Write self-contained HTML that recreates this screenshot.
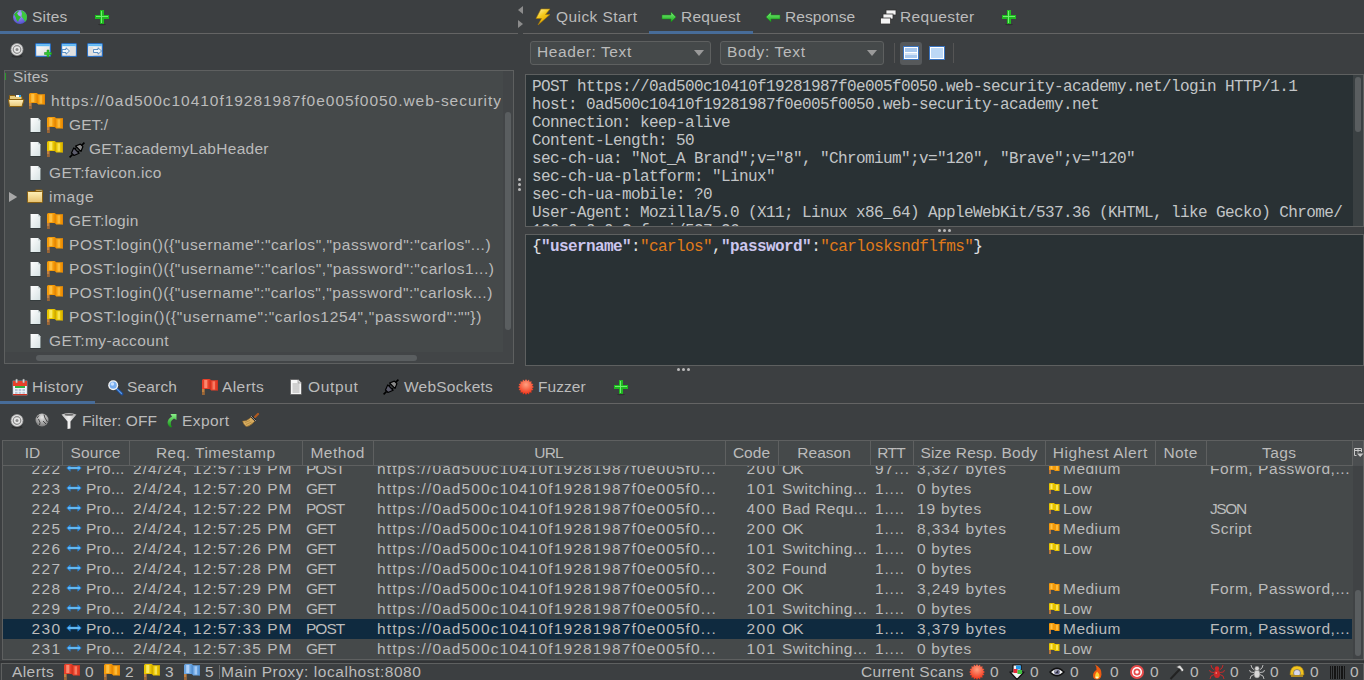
<!DOCTYPE html>
<html><head><meta charset="utf-8"><style>
html,body{margin:0;padding:0;width:1364px;height:680px;overflow:hidden;background:#3c3f41}
body>div,body div{position:absolute;box-sizing:content-box}
.t{font-family:"Liberation Sans",sans-serif;font-size:15.5px;line-height:16px;white-space:pre;color:#bbbbbb}
.m{font-family:"Liberation Mono",monospace;font-size:16px;letter-spacing:-0.6px;line-height:18px;white-space:pre;color:#d4d7d9}
.m span{position:static}
svg{position:absolute;overflow:visible}
</style></head><body>
<div style="left:0;top:0;width:1364px;height:680px;background:#3c3f41"></div>
<svg style="position:absolute;left:12px;top:9px;" width="16" height="16" viewBox="0 0 16 16"><defs><radialGradient id="gl" cx="0.45" cy="0.3" r="0.75"><stop offset="0" stop-color="#b0a8ff"/><stop offset="1" stop-color="#4a48c8"/></radialGradient></defs><circle cx="8" cy="8" r="7" fill="url(#gl)"/><path d="M2 5.5 Q4 2 7.5 1.2 L5 4.5 L6.5 6.5 L9 8 L7 10.5 L6 13 L4.5 11 L3.5 8 Z" fill="#2eb82e"/><path d="M9 1.2 Q14 2.5 15 7.5 L14.5 11 L13 13 L12 10.5 L9.5 7.5 L10 4.5 Z" fill="#3cc83c"/></svg>
<div class="t" style="left:32.0px;top:9px;letter-spacing:0.187px;color:#bbbbbb;">Sites</div>
<svg style="position:absolute;left:94px;top:9px;" width="16" height="16" viewBox="0 0 16 16"><rect x="6" y="1" width="4" height="14" fill="#1fb91f"/><rect x="1" y="6" width="14" height="4" fill="#1fb91f"/><rect x="7" y="2" width="1" height="12" fill="#6ef06e"/><rect x="2" y="7" width="12" height="1" fill="#6ef06e"/><ellipse cx="8" cy="15.5" rx="4" ry="0.8" fill="#222" opacity="0.5"/></svg>
<div style="left:0px;top:33px;width:518px;height:1px;background:#646464;"></div>
<div style="left:0px;top:31px;width:80px;height:3px;background:#476c99;"></div>
<svg style="position:absolute;left:10px;top:43px;" width="14" height="15" viewBox="0 0 14 15"><ellipse cx="7" cy="13.3" rx="5.5" ry="1.2" fill="#1a1a1a" opacity="0.45"/><circle cx="7" cy="6.5" r="6" fill="#e6e6e6" stroke="#9a9a9a" stroke-width="0.8"/><circle cx="7" cy="6.5" r="3.8" fill="none" stroke="#8a8a8a" stroke-width="1.2"/><circle cx="7" cy="6.5" r="1.5" fill="#8a8a8a"/></svg>
<svg style="position:absolute;left:35px;top:43px;" width="17" height="15" viewBox="0 0 17 15"><defs><linearGradient id="wb" x1="0" y1="0" x2="1" y2="1"><stop offset="0" stop-color="#ffffff"/><stop offset="1" stop-color="#d8d8d8"/></linearGradient></defs><rect x="0.6" y="0.6" width="14.8" height="12.8" rx="1" fill="url(#wb)" stroke="#2a6ec0" stroke-width="1.2"/><rect x="1.2" y="1.2" width="13.6" height="2" fill="#5cb8f4"/><path d="M9.5 9.5 H12 V7 H14 V9.5 H16.5 V11.5 H14 V14 H12 V11.5 H9.5Z" fill="#30c830" stroke="#1a8a1a" stroke-width="0.5"/></svg>
<svg style="position:absolute;left:61px;top:43px;" width="17" height="15" viewBox="0 0 17 15"><defs><linearGradient id="wb" x1="0" y1="0" x2="1" y2="1"><stop offset="0" stop-color="#ffffff"/><stop offset="1" stop-color="#d8d8d8"/></linearGradient></defs><rect x="0.6" y="0.6" width="14.8" height="12.8" rx="1" fill="url(#wb)" stroke="#2a6ec0" stroke-width="1.2"/><rect x="1.2" y="1.2" width="13.6" height="2" fill="#5cb8f4"/><rect x="9" y="4" width="5.5" height="8.6" fill="#e0e0e0"/><path d="M1.2 6.5 H5 V4.8 L8.5 8 L5 11.2 V9.5 H1.2Z" fill="#eef6fc" stroke="#3a78b8" stroke-width="0.8"/></svg>
<svg style="position:absolute;left:87px;top:43px;" width="17" height="15" viewBox="0 0 17 15"><defs><linearGradient id="wb" x1="0" y1="0" x2="1" y2="1"><stop offset="0" stop-color="#ffffff"/><stop offset="1" stop-color="#d8d8d8"/></linearGradient></defs><rect x="0.6" y="0.6" width="14.8" height="12.8" rx="1" fill="url(#wb)" stroke="#2a6ec0" stroke-width="1.2"/><rect x="1.2" y="1.2" width="13.6" height="2" fill="#5cb8f4"/><rect x="1.3" y="4" width="5" height="8.6" fill="#e0e0e0"/><path d="M6.5 6.5 H11 V4.8 L14.6 8 L11 11.2 V9.5 H6.5Z" fill="#eef6fc" stroke="#3a78b8" stroke-width="0.8"/></svg>
<div style="left:4px;top:70px;width:508px;height:292px;border:1px solid #5e6060;background:#45494a;"></div>
<div class="t" style="left:13.0px;top:69px;letter-spacing:0.187px;color:#bbbbbb;clip-path:inset(1px 0 0 0)">Sites</div>
<div style="left:5px;top:73px;width:1px;height:7px;background:#2a9a2a;"></div>
<svg style="position:absolute;left:8px;top:93px;" width="17" height="16" viewBox="0 0 17 16"><defs><linearGradient id="fo" x1="0" y1="0" x2="0" y2="1"><stop offset="0" stop-color="#fff0c0"/><stop offset="1" stop-color="#e8c878"/></linearGradient></defs><path d="M1.5 2.5 H6.5 L7.5 3.5 H14 V7 H1.5Z" fill="#e8cc80" stroke="#8a6010" stroke-width="1"/><rect x="8" y="2" width="5" height="2" fill="#fff"/><rect x="11" y="2" width="2" height="2" fill="#30a8f0"/><path d="M0.5 6.5 H16 L14 13.5 H1.5Z" fill="url(#fo)" stroke="#8a6010" stroke-width="1"/></svg>
<svg style="position:absolute;left:29px;top:93px;" width="16" height="16" viewBox="0 0 16 16"><path d="M0 9 H2.6 V16 H0Z" fill="#c08040"/><path d="M0 13 H2.6 V16 H0Z" fill="#8a5a30" opacity="0.7"/><path d="M0 1.5 Q0 0 1.5 0 H7.5 Q8.5 0.3 9 1.3 H16 V11.5 H9.2 Q8.5 10.2 7.5 10 H0Z" fill="#f39a0a"/><path d="M2.2 1 H5.4 V9 H2.2Z" fill="#ffc850" opacity="0.8"/><path d="M10.5 2.3 H13 V10.5 H10.5Z" fill="#ffc850" opacity="0.65"/><path d="M7.5 0.5 Q8.3 1 8.8 1.8 V10.5 Q8.2 10 7.5 10Z" fill="#d87400" opacity="0.6"/><path d="M14.6 1.3 H16 V11.5 H14.6Z" fill="#d87400" opacity="0.55"/></svg>
<div class="t" style="left:51.0px;top:93px;letter-spacing:0.965px;color:#bbbbbb;width:450px;overflow:hidden">https://0ad500c10410f19281987f0e005f0050.web-security-academy.net</div>
<svg style="position:absolute;left:29px;top:117px;" width="13" height="16" viewBox="0 0 13 16"><defs><linearGradient id="fg" x1="0" y1="0" x2="1" y2="1"><stop offset="0" stop-color="#ffffff"/><stop offset="1" stop-color="#d6e2e3"/></linearGradient></defs><path d="M1 1.5 H9 L12 4.5 V15.5 H1Z" fill="#1e2a2c" opacity="0.8"/><path d="M1.5 1 H9 L11.5 3.5 V15 H1.5Z" fill="url(#fg)"/><path d="M9 1 V3.5 H11.5Z" fill="#c8d4d6"/></svg>
<svg style="position:absolute;left:47px;top:117px;" width="16" height="16" viewBox="0 0 16 16"><path d="M0 9 H2.6 V16 H0Z" fill="#c08040"/><path d="M0 13 H2.6 V16 H0Z" fill="#8a5a30" opacity="0.7"/><path d="M0 1.5 Q0 0 1.5 0 H7.5 Q8.5 0.3 9 1.3 H16 V11.5 H9.2 Q8.5 10.2 7.5 10 H0Z" fill="#f39a0a"/><path d="M2.2 1 H5.4 V9 H2.2Z" fill="#ffc850" opacity="0.8"/><path d="M10.5 2.3 H13 V10.5 H10.5Z" fill="#ffc850" opacity="0.65"/><path d="M7.5 0.5 Q8.3 1 8.8 1.8 V10.5 Q8.2 10 7.5 10Z" fill="#d87400" opacity="0.6"/><path d="M14.6 1.3 H16 V11.5 H14.6Z" fill="#d87400" opacity="0.55"/></svg>
<div class="t" style="left:69.0px;top:117px;letter-spacing:0.100px;color:#bbbbbb;">GET:/</div>
<svg style="position:absolute;left:29px;top:141px;" width="13" height="16" viewBox="0 0 13 16"><defs><linearGradient id="fg" x1="0" y1="0" x2="1" y2="1"><stop offset="0" stop-color="#ffffff"/><stop offset="1" stop-color="#d6e2e3"/></linearGradient></defs><path d="M1 1.5 H9 L12 4.5 V15.5 H1Z" fill="#1e2a2c" opacity="0.8"/><path d="M1.5 1 H9 L11.5 3.5 V15 H1.5Z" fill="url(#fg)"/><path d="M9 1 V3.5 H11.5Z" fill="#c8d4d6"/></svg>
<svg style="position:absolute;left:47px;top:141px;" width="16" height="16" viewBox="0 0 16 16"><path d="M0 9 H2.6 V16 H0Z" fill="#c08040"/><path d="M0 13 H2.6 V16 H0Z" fill="#8a5a30" opacity="0.7"/><path d="M0 1.5 Q0 0 1.5 0 H7.5 Q8.5 0.3 9 1.3 H16 V11.5 H9.2 Q8.5 10.2 7.5 10 H0Z" fill="#e8c400"/><path d="M2.2 1 H5.4 V9 H2.2Z" fill="#fff27a" opacity="0.8"/><path d="M10.5 2.3 H13 V10.5 H10.5Z" fill="#fff27a" opacity="0.65"/><path d="M7.5 0.5 Q8.3 1 8.8 1.8 V10.5 Q8.2 10 7.5 10Z" fill="#b89000" opacity="0.6"/><path d="M14.6 1.3 H16 V11.5 H14.6Z" fill="#b89000" opacity="0.55"/></svg>
<svg style="position:absolute;left:68px;top:141px;" width="18" height="18" viewBox="0 0 18 18"><g transform="rotate(45 9 9)"><path d="M9 -1.5 V2.5 M9 15.5 V19.5" stroke="#000" stroke-width="1.6"/><path d="M7.2 2.5 H10.8 L12.8 7.2 H5.2Z" fill="#8c8c8c" stroke="#000" stroke-width="1.2" stroke-linejoin="round"/><path d="M6.8 7.6 V9.6 M11.2 7.6 V9.6" stroke="#000" stroke-width="1"/><path d="M5.2 9.8 H12.8 L10.8 15 H7.2Z" fill="#5c5c6c" stroke="#000" stroke-width="1.2" stroke-linejoin="round"/></g></svg>
<div class="t" style="left:89.0px;top:141px;letter-spacing:0.288px;color:#bbbbbb;">GET:academyLabHeader</div>
<svg style="position:absolute;left:29px;top:165px;" width="13" height="16" viewBox="0 0 13 16"><defs><linearGradient id="fg" x1="0" y1="0" x2="1" y2="1"><stop offset="0" stop-color="#ffffff"/><stop offset="1" stop-color="#d6e2e3"/></linearGradient></defs><path d="M1 1.5 H9 L12 4.5 V15.5 H1Z" fill="#1e2a2c" opacity="0.8"/><path d="M1.5 1 H9 L11.5 3.5 V15 H1.5Z" fill="url(#fg)"/><path d="M9 1 V3.5 H11.5Z" fill="#c8d4d6"/></svg>
<div class="t" style="left:49.0px;top:165px;letter-spacing:0.339px;color:#bbbbbb;">GET:favicon.ico</div>
<svg style="position:absolute;left:9px;top:192px;" width="9" height="11" viewBox="0 0 9 11"><path d="M0 0 L8.2 5 L0 10Z" fill="#a8a8a8"/></svg>
<svg style="position:absolute;left:27px;top:189px;" width="17" height="15" viewBox="0 0 17 15"><defs><linearGradient id="fc" x1="0" y1="0" x2="0" y2="1"><stop offset="0" stop-color="#fff0b8"/><stop offset="1" stop-color="#e6c270"/></linearGradient></defs><path d="M8.5 1 H14.5 Q15.5 1 15.5 2 V4 H8.5Z" fill="#e8c070" stroke="#8a6010" stroke-width="1"/><rect x="9.5" y="1.8" width="5" height="1.6" fill="#fff"/><rect x="12.5" y="1.8" width="2" height="1.6" fill="#20a8f0"/><rect x="0.5" y="2.5" width="15" height="11" rx="0.8" fill="url(#fc)" stroke="#8a6010" stroke-width="1"/></svg>
<div class="t" style="left:49.0px;top:189px;letter-spacing:0.590px;color:#bbbbbb;">image</div>
<svg style="position:absolute;left:29px;top:213px;" width="13" height="16" viewBox="0 0 13 16"><defs><linearGradient id="fg" x1="0" y1="0" x2="1" y2="1"><stop offset="0" stop-color="#ffffff"/><stop offset="1" stop-color="#d6e2e3"/></linearGradient></defs><path d="M1 1.5 H9 L12 4.5 V15.5 H1Z" fill="#1e2a2c" opacity="0.8"/><path d="M1.5 1 H9 L11.5 3.5 V15 H1.5Z" fill="url(#fg)"/><path d="M9 1 V3.5 H11.5Z" fill="#c8d4d6"/></svg>
<svg style="position:absolute;left:47px;top:213px;" width="16" height="16" viewBox="0 0 16 16"><path d="M0 9 H2.6 V16 H0Z" fill="#c08040"/><path d="M0 13 H2.6 V16 H0Z" fill="#8a5a30" opacity="0.7"/><path d="M0 1.5 Q0 0 1.5 0 H7.5 Q8.5 0.3 9 1.3 H16 V11.5 H9.2 Q8.5 10.2 7.5 10 H0Z" fill="#f39a0a"/><path d="M2.2 1 H5.4 V9 H2.2Z" fill="#ffc850" opacity="0.8"/><path d="M10.5 2.3 H13 V10.5 H10.5Z" fill="#ffc850" opacity="0.65"/><path d="M7.5 0.5 Q8.3 1 8.8 1.8 V10.5 Q8.2 10 7.5 10Z" fill="#d87400" opacity="0.6"/><path d="M14.6 1.3 H16 V11.5 H14.6Z" fill="#d87400" opacity="0.55"/></svg>
<div class="t" style="left:69.0px;top:213px;letter-spacing:0.264px;color:#bbbbbb;">GET:login</div>
<svg style="position:absolute;left:29px;top:237px;" width="13" height="16" viewBox="0 0 13 16"><defs><linearGradient id="fg" x1="0" y1="0" x2="1" y2="1"><stop offset="0" stop-color="#ffffff"/><stop offset="1" stop-color="#d6e2e3"/></linearGradient></defs><path d="M1 1.5 H9 L12 4.5 V15.5 H1Z" fill="#1e2a2c" opacity="0.8"/><path d="M1.5 1 H9 L11.5 3.5 V15 H1.5Z" fill="url(#fg)"/><path d="M9 1 V3.5 H11.5Z" fill="#c8d4d6"/></svg>
<svg style="position:absolute;left:47px;top:237px;" width="16" height="16" viewBox="0 0 16 16"><path d="M0 9 H2.6 V16 H0Z" fill="#c08040"/><path d="M0 13 H2.6 V16 H0Z" fill="#8a5a30" opacity="0.7"/><path d="M0 1.5 Q0 0 1.5 0 H7.5 Q8.5 0.3 9 1.3 H16 V11.5 H9.2 Q8.5 10.2 7.5 10 H0Z" fill="#f39a0a"/><path d="M2.2 1 H5.4 V9 H2.2Z" fill="#ffc850" opacity="0.8"/><path d="M10.5 2.3 H13 V10.5 H10.5Z" fill="#ffc850" opacity="0.65"/><path d="M7.5 0.5 Q8.3 1 8.8 1.8 V10.5 Q8.2 10 7.5 10Z" fill="#d87400" opacity="0.6"/><path d="M14.6 1.3 H16 V11.5 H14.6Z" fill="#d87400" opacity="0.55"/></svg>
<div class="t" style="left:69.0px;top:237px;letter-spacing:0.543px;color:#bbbbbb;">POST:login()({&quot;username&quot;:&quot;carlos&quot;,&quot;password&quot;:&quot;carlos&quot;...)</div>
<svg style="position:absolute;left:29px;top:261px;" width="13" height="16" viewBox="0 0 13 16"><defs><linearGradient id="fg" x1="0" y1="0" x2="1" y2="1"><stop offset="0" stop-color="#ffffff"/><stop offset="1" stop-color="#d6e2e3"/></linearGradient></defs><path d="M1 1.5 H9 L12 4.5 V15.5 H1Z" fill="#1e2a2c" opacity="0.8"/><path d="M1.5 1 H9 L11.5 3.5 V15 H1.5Z" fill="url(#fg)"/><path d="M9 1 V3.5 H11.5Z" fill="#c8d4d6"/></svg>
<svg style="position:absolute;left:47px;top:261px;" width="16" height="16" viewBox="0 0 16 16"><path d="M0 9 H2.6 V16 H0Z" fill="#c08040"/><path d="M0 13 H2.6 V16 H0Z" fill="#8a5a30" opacity="0.7"/><path d="M0 1.5 Q0 0 1.5 0 H7.5 Q8.5 0.3 9 1.3 H16 V11.5 H9.2 Q8.5 10.2 7.5 10 H0Z" fill="#f39a0a"/><path d="M2.2 1 H5.4 V9 H2.2Z" fill="#ffc850" opacity="0.8"/><path d="M10.5 2.3 H13 V10.5 H10.5Z" fill="#ffc850" opacity="0.65"/><path d="M7.5 0.5 Q8.3 1 8.8 1.8 V10.5 Q8.2 10 7.5 10Z" fill="#d87400" opacity="0.6"/><path d="M14.6 1.3 H16 V11.5 H14.6Z" fill="#d87400" opacity="0.55"/></svg>
<div class="t" style="left:69.0px;top:261px;letter-spacing:0.547px;color:#bbbbbb;">POST:login()({&quot;username&quot;:&quot;carlos&quot;,&quot;password&quot;:&quot;carlos1...)</div>
<svg style="position:absolute;left:29px;top:285px;" width="13" height="16" viewBox="0 0 13 16"><defs><linearGradient id="fg" x1="0" y1="0" x2="1" y2="1"><stop offset="0" stop-color="#ffffff"/><stop offset="1" stop-color="#d6e2e3"/></linearGradient></defs><path d="M1 1.5 H9 L12 4.5 V15.5 H1Z" fill="#1e2a2c" opacity="0.8"/><path d="M1.5 1 H9 L11.5 3.5 V15 H1.5Z" fill="url(#fg)"/><path d="M9 1 V3.5 H11.5Z" fill="#c8d4d6"/></svg>
<svg style="position:absolute;left:47px;top:285px;" width="16" height="16" viewBox="0 0 16 16"><path d="M0 9 H2.6 V16 H0Z" fill="#c08040"/><path d="M0 13 H2.6 V16 H0Z" fill="#8a5a30" opacity="0.7"/><path d="M0 1.5 Q0 0 1.5 0 H7.5 Q8.5 0.3 9 1.3 H16 V11.5 H9.2 Q8.5 10.2 7.5 10 H0Z" fill="#f39a0a"/><path d="M2.2 1 H5.4 V9 H2.2Z" fill="#ffc850" opacity="0.8"/><path d="M10.5 2.3 H13 V10.5 H10.5Z" fill="#ffc850" opacity="0.65"/><path d="M7.5 0.5 Q8.3 1 8.8 1.8 V10.5 Q8.2 10 7.5 10Z" fill="#d87400" opacity="0.6"/><path d="M14.6 1.3 H16 V11.5 H14.6Z" fill="#d87400" opacity="0.55"/></svg>
<div class="t" style="left:69.0px;top:285px;letter-spacing:0.534px;color:#bbbbbb;">POST:login()({&quot;username&quot;:&quot;carlos&quot;,&quot;password&quot;:&quot;carlosk...)</div>
<svg style="position:absolute;left:29px;top:309px;" width="13" height="16" viewBox="0 0 13 16"><defs><linearGradient id="fg" x1="0" y1="0" x2="1" y2="1"><stop offset="0" stop-color="#ffffff"/><stop offset="1" stop-color="#d6e2e3"/></linearGradient></defs><path d="M1 1.5 H9 L12 4.5 V15.5 H1Z" fill="#1e2a2c" opacity="0.8"/><path d="M1.5 1 H9 L11.5 3.5 V15 H1.5Z" fill="url(#fg)"/><path d="M9 1 V3.5 H11.5Z" fill="#c8d4d6"/></svg>
<svg style="position:absolute;left:47px;top:309px;" width="16" height="16" viewBox="0 0 16 16"><path d="M0 9 H2.6 V16 H0Z" fill="#c08040"/><path d="M0 13 H2.6 V16 H0Z" fill="#8a5a30" opacity="0.7"/><path d="M0 1.5 Q0 0 1.5 0 H7.5 Q8.5 0.3 9 1.3 H16 V11.5 H9.2 Q8.5 10.2 7.5 10 H0Z" fill="#e8c400"/><path d="M2.2 1 H5.4 V9 H2.2Z" fill="#fff27a" opacity="0.8"/><path d="M10.5 2.3 H13 V10.5 H10.5Z" fill="#fff27a" opacity="0.65"/><path d="M7.5 0.5 Q8.3 1 8.8 1.8 V10.5 Q8.2 10 7.5 10Z" fill="#b89000" opacity="0.6"/><path d="M14.6 1.3 H16 V11.5 H14.6Z" fill="#b89000" opacity="0.55"/></svg>
<div class="t" style="left:69.0px;top:309px;letter-spacing:0.689px;color:#bbbbbb;">POST:login()({&quot;username&quot;:&quot;carlos1254&quot;,&quot;password&quot;:&quot;&quot;})</div>
<svg style="position:absolute;left:29px;top:333px;" width="13" height="16" viewBox="0 0 13 16"><defs><linearGradient id="fg" x1="0" y1="0" x2="1" y2="1"><stop offset="0" stop-color="#ffffff"/><stop offset="1" stop-color="#d6e2e3"/></linearGradient></defs><path d="M1 1.5 H9 L12 4.5 V15.5 H1Z" fill="#1e2a2c" opacity="0.8"/><path d="M1.5 1 H9 L11.5 3.5 V15 H1.5Z" fill="url(#fg)"/><path d="M9 1 V3.5 H11.5Z" fill="#c8d4d6"/></svg>
<div class="t" style="left:49.0px;top:333px;letter-spacing:0.386px;color:#bbbbbb;">GET:my-account</div>
<div style="left:503px;top:71px;width:10px;height:281px;background:#424547;"></div>
<div style="left:505px;top:112px;width:6px;height:218px;background:#5a5e60;border-radius:3px"></div>
<div style="left:5px;top:352px;width:508px;height:11px;background:#424547;"></div>
<div style="left:36px;top:355px;width:381px;height:6px;background:#5a5e60;border-radius:3px"></div>
<div style="left:518px;top:178px;width:3px;height:3px;background:#bbbbbb;border-radius:50%"></div>
<div style="left:518px;top:183px;width:3px;height:3px;background:#bbbbbb;border-radius:50%"></div>
<div style="left:518px;top:188px;width:3px;height:3px;background:#bbbbbb;border-radius:50%"></div>
<svg style="position:absolute;left:517px;top:5px;" width="8" height="24" viewBox="0 0 8 24"><path d="M6 1 L1 5 L6 9Z" fill="#8c8c8c"/><path d="M1 15 L6 19 L1 23Z" fill="#8c8c8c"/></svg>
<div style="left:523px;top:33px;width:841px;height:1px;background:#646464;"></div>
<svg style="position:absolute;left:535px;top:8px;" width="16" height="18" viewBox="0 0 16 18"><defs><linearGradient id="bg" x1="0" y1="0" x2="0.6" y2="1"><stop offset="0" stop-color="#fff6b0"/><stop offset="0.5" stop-color="#f4c818"/><stop offset="1" stop-color="#e0a000"/></linearGradient></defs><path d="M6 1 H15 L10.5 6.5 H15 L3 17 L6.5 10.5 H1Z" fill="url(#bg)" stroke="#a87800" stroke-width="0.6"/></svg>
<div class="t" style="left:556.0px;top:9px;letter-spacing:0.433px;color:#bbbbbb;">Quick Start</div>
<div style="left:649px;top:31px;width:104px;height:3px;background:#476c99;"></div>
<svg style="position:absolute;left:661px;top:9px;" width="16" height="16" viewBox="0 0 16 16"><defs><linearGradient id="ag" x1="0" y1="0" x2="0" y2="1"><stop offset="0" stop-color="#7cf07c"/><stop offset="1" stop-color="#18a818"/></linearGradient></defs><path d="M1 6 H10 V3 L15 8 L10 13 V10 H1Z" fill="url(#ag)" stroke="#148a14" stroke-width="0.5"/></svg>
<div class="t" style="left:681.0px;top:9px;letter-spacing:0.260px;color:#bbbbbb;">Request</div>
<svg style="position:absolute;left:765px;top:9px;" width="16" height="16" viewBox="0 0 16 16"><defs><linearGradient id="ag" x1="0" y1="0" x2="0" y2="1"><stop offset="0" stop-color="#7cf07c"/><stop offset="1" stop-color="#18a818"/></linearGradient></defs><path d="M15 6 H6 V3 L1 8 L6 13 V10 H15Z" fill="url(#ag)" stroke="#148a14" stroke-width="0.5"/></svg>
<div class="t" style="left:785.0px;top:9px;letter-spacing:0.062px;color:#bbbbbb;">Response</div>
<svg style="position:absolute;left:880px;top:9px;" width="17" height="16" viewBox="0 0 17 16"><rect x="6" y="1" width="10" height="5" fill="#f4f4f4" stroke="#333" stroke-width="0.8"/><rect x="3" y="5" width="10" height="5" fill="#f4f4f4" stroke="#333" stroke-width="0.8"/><rect x="0.5" y="9" width="10" height="6" fill="#f4f4f4" stroke="#333" stroke-width="0.8"/></svg>
<div class="t" style="left:900.0px;top:9px;letter-spacing:0.325px;color:#bbbbbb;">Requester</div>
<svg style="position:absolute;left:1001px;top:9px;" width="16" height="16" viewBox="0 0 16 16"><rect x="6" y="1" width="4" height="14" fill="#1fb91f"/><rect x="1" y="6" width="14" height="4" fill="#1fb91f"/><rect x="7" y="2" width="1" height="12" fill="#6ef06e"/><rect x="2" y="7" width="12" height="1" fill="#6ef06e"/><ellipse cx="8" cy="15.5" rx="4" ry="0.8" fill="#222" opacity="0.5"/></svg>
<div style="left:530px;top:41px;width:179px;height:22px;border:1px solid #5e6060;background:#45494a;border-radius:3px"></div>
<div class="t" style="left:537.0px;top:44px;letter-spacing:0.604px;color:#bbbbbb;">Header: Text</div>
<svg style="position:absolute;left:694px;top:50px;" width="10" height="6" viewBox="0 0 10 6"><path d="M0 0 H10 L5 6Z" fill="#9a9a9a"/></svg>
<div style="left:720px;top:41px;width:162px;height:22px;border:1px solid #5e6060;background:#45494a;border-radius:3px"></div>
<div class="t" style="left:727.0px;top:44px;letter-spacing:0.656px;color:#bbbbbb;">Body: Text</div>
<svg style="position:absolute;left:867px;top:50px;" width="10" height="6" viewBox="0 0 10 6"><path d="M0 0 H10 L5 6Z" fill="#9a9a9a"/></svg>
<div style="left:894px;top:43px;width:1px;height:20px;background:#555;"></div>
<div style="left:900px;top:42px;width:22px;height:23px;background:#56595b;border-radius:3px"></div>
<svg style="position:absolute;left:903px;top:46px;" width="16" height="14" viewBox="0 0 16 14"><rect x="0.5" y="0.5" width="15" height="13" fill="none" stroke="#3a74c0"/><rect x="1.5" y="1.5" width="13" height="11" fill="#a8c8ee" stroke="#ffffff"/><path d="M2 6.5 H14 M2 8 H14" stroke="#ffffff" stroke-width="1"/></svg>
<svg style="position:absolute;left:929px;top:46px;" width="16" height="14" viewBox="0 0 16 14"><rect x="0.5" y="0.5" width="15" height="13" fill="none" stroke="#3a74c0"/><rect x="1.5" y="1.5" width="13" height="11" fill="#bcd8f6" stroke="#ffffff"/></svg>
<div style="left:953px;top:43px;width:1px;height:20px;background:#555;"></div>
<div style="left:525px;top:74px;width:837px;height:151px;border:1px solid #5e6060;background:#293134;"></div>
<div style="left:526px;top:75px;width:826px;height:151px;overflow:hidden">
<div class="m" style="left:6px;top:3px;color:#c2c5c7">POST https://0ad500c10410f19281987f0e005f0050.web-security-academy.net/login HTTP/1.1</div>
<div class="m" style="left:6px;top:21px;color:#c2c5c7">host: 0ad500c10410f19281987f0e005f0050.web-security-academy.net</div>
<div class="m" style="left:6px;top:39px;color:#c2c5c7">Connection: keep-alive</div>
<div class="m" style="left:6px;top:57px;color:#c2c5c7">Content-Length: 50</div>
<div class="m" style="left:6px;top:75px;color:#c2c5c7">sec-ch-ua: &quot;Not_A Brand&quot;;v=&quot;8&quot;, &quot;Chromium&quot;;v=&quot;120&quot;, &quot;Brave&quot;;v=&quot;120&quot;</div>
<div class="m" style="left:6px;top:93px;color:#c2c5c7">sec-ch-ua-platform: &quot;Linux&quot;</div>
<div class="m" style="left:6px;top:111px;color:#c2c5c7">sec-ch-ua-mobile: ?0</div>
<div class="m" style="left:6px;top:129px;color:#c2c5c7">User-Agent: Mozilla/5.0 (X11; Linux x86_64) AppleWebKit/537.36 (KHTML, like Gecko) Chrome/</div>
<div class="m" style="left:6px;top:147px;color:#c2c5c7">120.0.0.0 Safari/537.36</div>
</div>
<div style="left:1353px;top:75px;width:10px;height:151px;background:#3a4042;"></div>
<div style="left:1355px;top:77px;width:6px;height:55px;background:#5a5e60;border-radius:3px"></div>
<div style="left:938px;top:229px;width:3px;height:3px;background:#bbbbbb;border-radius:50%"></div>
<div style="left:943px;top:229px;width:3px;height:3px;background:#bbbbbb;border-radius:50%"></div>
<div style="left:948px;top:229px;width:3px;height:3px;background:#bbbbbb;border-radius:50%"></div>
<div style="left:525px;top:234px;width:837px;height:130px;border:1px solid #5e6060;background:#293134;"></div>
<div class="m" style="left:532px;top:238px;white-space:pre"><span style="color:#e0e2e4;">{</span><span style="color:#ccc6ee;font-weight:bold">&quot;username&quot;</span><span style="color:#e0e2e4;">:</span><span style="color:#e07b1a;">&quot;carlos&quot;</span><span style="color:#e0e2e4;">,</span><span style="color:#ccc6ee;font-weight:bold">&quot;password&quot;</span><span style="color:#e0e2e4;">:</span><span style="color:#e07b1a;">&quot;carlosksndflfms&quot;</span><span style="color:#e0e2e4;">}</span></div>
<div style="left:677px;top:368px;width:3px;height:3px;background:#bbbbbb;border-radius:50%"></div>
<div style="left:682px;top:368px;width:3px;height:3px;background:#bbbbbb;border-radius:50%"></div>
<div style="left:687px;top:368px;width:3px;height:3px;background:#bbbbbb;border-radius:50%"></div>
<div style="left:0px;top:403px;width:1364px;height:1px;background:#646464;"></div>
<div style="left:0px;top:401px;width:95px;height:3px;background:#476c99;"></div>
<svg style="position:absolute;left:12px;top:378px;" width="16" height="18" viewBox="0 0 16 18"><rect x="1" y="3" width="14" height="14" fill="#eef4fa" stroke="#b8c4d0" stroke-width="0.6"/><rect x="1" y="3" width="14" height="5" fill="#e8402a"/><rect x="1" y="16" width="14" height="1.2" fill="#d03020"/><rect x="3" y="8" width="10" height="2" fill="#30b040"/><rect x="3" y="11" width="2.6" height="2" fill="#b8c4d4"/><rect x="6.7" y="11" width="2.6" height="2" fill="#b8c4d4"/><rect x="10.4" y="11" width="2.6" height="2" fill="#b8c4d4"/><rect x="3" y="13.8" width="2.6" height="2" fill="#b8c4d4"/><rect x="6.7" y="13.8" width="2.6" height="2" fill="#b8c4d4"/><rect x="10.4" y="13.8" width="2.6" height="2" fill="#b8c4d4"/><rect x="3.6" y="1" width="2" height="4" rx="1" fill="#d8d8d8" stroke="#777" stroke-width="0.4"/><rect x="10.6" y="1" width="2" height="4" rx="1" fill="#d8d8d8" stroke="#777" stroke-width="0.4"/></svg>
<div class="t" style="left:32.0px;top:379px;letter-spacing:0.480px;color:#bbbbbb;">History</div>
<svg style="position:absolute;left:107px;top:379px;" width="17" height="17" viewBox="0 0 17 17"><path d="M9.5 9.5 L15 15" stroke="#1e4e98" stroke-width="3" stroke-linecap="round"/><path d="M9.8 9.8 L14.5 14.5" stroke="#5a9ae8" stroke-width="1.2" stroke-linecap="round"/><circle cx="6.2" cy="6.2" r="5" fill="#f4f4f4"/><circle cx="6.2" cy="6.2" r="3.6" fill="#78aef0"/><circle cx="5.4" cy="5" r="1.8" fill="#c8e0ff"/></svg>
<div class="t" style="left:127.0px;top:379px;letter-spacing:0.171px;color:#bbbbbb;">Search</div>
<svg style="position:absolute;left:202px;top:379px;" width="16" height="16" viewBox="0 0 16 16"><path d="M0 9 H2.6 V16 H0Z" fill="#c08040"/><path d="M0 13 H2.6 V16 H0Z" fill="#8a5a30" opacity="0.7"/><path d="M0 1.5 Q0 0 1.5 0 H7.5 Q8.5 0.3 9 1.3 H16 V11.5 H9.2 Q8.5 10.2 7.5 10 H0Z" fill="#e8402a"/><path d="M2.2 1 H5.4 V9 H2.2Z" fill="#ff9a80" opacity="0.8"/><path d="M10.5 2.3 H13 V10.5 H10.5Z" fill="#ff9a80" opacity="0.65"/><path d="M7.5 0.5 Q8.3 1 8.8 1.8 V10.5 Q8.2 10 7.5 10Z" fill="#b82a18" opacity="0.6"/><path d="M14.6 1.3 H16 V11.5 H14.6Z" fill="#b82a18" opacity="0.55"/></svg>
<div class="t" style="left:222.0px;top:379px;letter-spacing:0.408px;color:#bbbbbb;">Alerts</div>
<svg style="position:absolute;left:289px;top:378px;" width="14" height="18" viewBox="0 0 14 18"><path d="M1.5 1.5 H9 L12.5 5 V16.5 H1.5Z" fill="#f6f6f6" stroke="#555" stroke-width="0.7"/><path d="M9 1.5 V5 H12.5" fill="#ddd" stroke="#777" stroke-width="0.5"/><path d="M3.5 6 H10.5 M3.5 8 H10.5 M3.5 10 H10.5 M3.5 12 H10.5 M3.5 14 H10.5" stroke="#9a9a9a" stroke-width="0.8"/></svg>
<div class="t" style="left:308.0px;top:379px;letter-spacing:0.640px;color:#bbbbbb;">Output</div>
<svg style="position:absolute;left:382px;top:378px;" width="18" height="18" viewBox="0 0 18 18"><g transform="rotate(45 9 9)"><path d="M9 -1.5 V2.5 M9 15.5 V19.5" stroke="#000" stroke-width="1.6"/><path d="M7.2 2.5 H10.8 L12.8 7.2 H5.2Z" fill="#8c8c8c" stroke="#000" stroke-width="1.2" stroke-linejoin="round"/><path d="M6.8 7.6 V9.6 M11.2 7.6 V9.6" stroke="#000" stroke-width="1"/><path d="M5.2 9.8 H12.8 L10.8 15 H7.2Z" fill="#5c5c6c" stroke="#000" stroke-width="1.2" stroke-linejoin="round"/></g></svg>
<div class="t" style="left:404.0px;top:379px;letter-spacing:0.234px;color:#bbbbbb;">WebSockets</div>
<svg style="position:absolute;left:518px;top:379px;" width="16" height="16" viewBox="0 0 16 16"><defs><radialGradient id="bu" cx="0.5" cy="0.35" r="0.65"><stop offset="0" stop-color="#ffa080"/><stop offset="1" stop-color="#f02a10"/></radialGradient></defs><path d="M8.00 0.00 L9.22 1.88 L11.06 0.61 L11.47 2.81 L13.66 2.34 L13.19 4.53 L15.39 4.94 L14.12 6.78 L16.00 8.00 L14.12 9.22 L15.39 11.06 L13.19 11.47 L13.66 13.66 L11.47 13.19 L11.06 15.39 L9.22 14.12 L8.00 16.00 L6.78 14.12 L4.94 15.39 L4.53 13.19 L2.34 13.66 L2.81 11.47 L0.61 11.06 L1.88 9.22 L0.00 8.00 L1.88 6.78 L0.61 4.94 L2.81 4.53 L2.34 2.34 L4.53 2.81 L4.94 0.61 L6.78 1.88Z" fill="url(#bu)"/></svg>
<div class="t" style="left:538.0px;top:379px;letter-spacing:0.044px;color:#bbbbbb;">Fuzzer</div>
<svg style="position:absolute;left:613px;top:379px;" width="16" height="16" viewBox="0 0 16 16"><rect x="6" y="1" width="4" height="14" fill="#1fb91f"/><rect x="1" y="6" width="14" height="4" fill="#1fb91f"/><rect x="7" y="2" width="1" height="12" fill="#6ef06e"/><rect x="2" y="7" width="12" height="1" fill="#6ef06e"/><ellipse cx="8" cy="15.5" rx="4" ry="0.8" fill="#222" opacity="0.5"/></svg>
<svg style="position:absolute;left:10px;top:414px;" width="14" height="15" viewBox="0 0 14 15"><ellipse cx="7" cy="13.3" rx="5.5" ry="1.2" fill="#1a1a1a" opacity="0.45"/><circle cx="7" cy="6.5" r="6" fill="#e6e6e6" stroke="#9a9a9a" stroke-width="0.8"/><circle cx="7" cy="6.5" r="3.8" fill="none" stroke="#8a8a8a" stroke-width="1.2"/><circle cx="7" cy="6.5" r="1.5" fill="#8a8a8a"/></svg>
<svg style="position:absolute;left:35px;top:413px;" width="15" height="15" viewBox="0 0 15 15"><defs><radialGradient id="gg" cx="0.5" cy="0.3" r="0.7"><stop offset="0" stop-color="#e8e8e8"/><stop offset="1" stop-color="#7a7a7a"/></radialGradient></defs><circle cx="7" cy="7" r="6.5" fill="url(#gg)"/><path d="M2 5 L4 2.5 M3.5 6 L5 9.5 L4.5 12 M9 1.5 L10 5 L12.5 9 M8 8 L11 11" stroke="#3a3a3a" stroke-width="0.9" fill="none"/></svg>
<svg style="position:absolute;left:61px;top:412px;" width="16" height="18" viewBox="0 0 16 18"><defs><linearGradient id="fu" x1="0" y1="0" x2="1" y2="0"><stop offset="0" stop-color="#bdbdbd"/><stop offset="0.5" stop-color="#f4f4f4"/><stop offset="1" stop-color="#a8a8a8"/></linearGradient></defs><path d="M0.5 2.5 Q8 0 15.5 2.5 L9.5 9.5 V16.5 L6.5 17 V9.5Z" fill="url(#fu)"/><ellipse cx="8" cy="2.7" rx="4.5" ry="1" fill="#6a6a6a"/></svg>
<div class="t" style="left:82.0px;top:413px;letter-spacing:0.092px;color:#bbbbbb;">Filter: OFF</div>
<svg style="position:absolute;left:166px;top:413px;" width="11" height="15" viewBox="0 0 11 15"><defs><linearGradient id="ex" x1="0" y1="0" x2="0" y2="1"><stop offset="0" stop-color="#8af08a"/><stop offset="1" stop-color="#109010"/></linearGradient></defs><path d="M4.5 14.5 Q0 11 2.5 6.5 Q4 4.5 6 3.8 L4.5 1 H10.5 V7 L8 5.5 Q5.5 7 4.8 9 Q4.5 12 6 14Z" fill="url(#ex)"/></svg>
<div class="t" style="left:182.0px;top:413px;letter-spacing:0.445px;color:#bbbbbb;">Export</div>
<svg style="position:absolute;left:242px;top:413px;" width="17" height="15" viewBox="0 0 17 15"><path d="M13 4 L16 1" stroke="#b05a20" stroke-width="2.2" stroke-linecap="round"/><path d="M9.5 3.5 L13.5 7.5 L11.5 9.5 Q7 14 4 13.5 Q1 11 0.5 8 Q4 8.5 7.5 5.5Z" fill="#d8ac60" stroke="#8a6020" stroke-width="0.5"/><path d="M9.5 3.5 L13.5 7.5" stroke="#222" stroke-width="2.2"/><path d="M9.5 3.5 L13.5 7.5" stroke="#e8e8e8" stroke-width="1" stroke-dasharray="1 0.6"/><path d="M3 9.5 L8 7.5 M4 11.5 L9.5 9 M6 13 L11 10" stroke="#a07a30" stroke-width="0.6"/></svg>
<div style="left:2px;top:440px;width:1360px;height:218px;border:1px solid #5e6060;background:#45494a;"></div>
<div style="left:3px;top:465px;width:1350px;height:1px;background:#5e6060;"></div>
<div class="t" style="left:24.8px;top:445px;letter-spacing:-0.029px;color:#bbbbbb;">ID</div>
<div style="left:62px;top:441px;width:1px;height:24px;background:#5e6060;"></div>
<div class="t" style="left:70.5px;top:445px;letter-spacing:0.168px;color:#bbbbbb;">Source</div>
<div style="left:129px;top:441px;width:1px;height:24px;background:#5e6060;"></div>
<div class="t" style="left:155.9px;top:445px;letter-spacing:0.482px;color:#bbbbbb;">Req. Timestamp</div>
<div style="left:302px;top:441px;width:1px;height:24px;background:#5e6060;"></div>
<div class="t" style="left:310.5px;top:445px;letter-spacing:0.448px;color:#bbbbbb;">Method</div>
<div style="left:373px;top:441px;width:1px;height:24px;background:#5e6060;"></div>
<div class="t" style="left:534.2px;top:445px;letter-spacing:-0.748px;color:#bbbbbb;">URL</div>
<div style="left:725px;top:441px;width:1px;height:24px;background:#5e6060;"></div>
<div class="t" style="left:732.9px;top:445px;letter-spacing:0.017px;color:#bbbbbb;">Code</div>
<div style="left:778px;top:441px;width:1px;height:24px;background:#5e6060;"></div>
<div class="t" style="left:797.3px;top:445px;letter-spacing:0.012px;color:#bbbbbb;">Reason</div>
<div style="left:870px;top:441px;width:1px;height:24px;background:#5e6060;"></div>
<div class="t" style="left:877.3px;top:445px;letter-spacing:-0.687px;color:#bbbbbb;">RTT</div>
<div style="left:913px;top:441px;width:1px;height:24px;background:#5e6060;"></div>
<div class="t" style="left:920.5px;top:445px;letter-spacing:0.169px;color:#bbbbbb;">Size Resp. Body</div>
<div style="left:1045px;top:441px;width:1px;height:24px;background:#5e6060;"></div>
<div class="t" style="left:1052.8px;top:445px;letter-spacing:0.548px;color:#bbbbbb;">Highest Alert</div>
<div style="left:1155px;top:441px;width:1px;height:24px;background:#5e6060;"></div>
<div class="t" style="left:1163.5px;top:445px;letter-spacing:0.396px;color:#bbbbbb;">Note</div>
<div style="left:1206px;top:441px;width:1px;height:24px;background:#5e6060;"></div>
<div class="t" style="left:1262.0px;top:445px;letter-spacing:0.441px;color:#bbbbbb;">Tags</div>
<div style="left:1352px;top:441px;width:1px;height:24px;background:#5e6060;"></div>
<div style="left:1353px;top:441px;width:10px;height:25px;background:#4b4e50;"></div>
<svg style="position:absolute;left:1353px;top:447px;" width="11" height="12" viewBox="0 0 11 12"><path d="M1.5 1.5 H8.5 V5 M1.5 1.5 V8.5 H3.5 M1.5 3.5 H8.5 M5 1.5 V5.5" stroke="#c8c8c8" stroke-width="1" fill="none"/><path d="M4 6.5 H10.5 L7.25 10Z" fill="#c8c8c8"/></svg>
<div style="left:3px;top:466px;width:1349px;height:193px;overflow:hidden">
<div class="t" style="left:28.4px;top:-5px;letter-spacing:1.380px;color:#bbbbbb;">222</div>
<svg style="position:absolute;left:63px;top:-2px;" width="16" height="8" viewBox="0 0 16 8"><path d="M0.3 4 L4.5 0.3 V2.8 H11.5 V0.3 L15.7 4 L11.5 7.7 V5.2 H4.5 V7.7Z" fill="#2a88dc"/><path d="M2 4 H14" stroke="#8ad8ff" stroke-width="1.2"/></svg>
<div class="t" style="left:83.0px;top:-5px;letter-spacing:0.256px;color:#bbbbbb;">Pro...</div>
<div class="t" style="left:130.0px;top:-5px;letter-spacing:1.048px;color:#bbbbbb;">2/4/24, 12:57:19 PM</div>
<div class="t" style="left:303.0px;top:-5px;letter-spacing:-0.996px;color:#bbbbbb;">POST</div>
<div class="t" style="left:374.0px;top:-5px;letter-spacing:1.110px;color:#bbbbbb;">https://0ad500c10410f19281987f0e005f0...</div>
<div class="t" style="left:743.4px;top:-5px;letter-spacing:1.380px;color:#bbbbbb;">200</div>
<div class="t" style="left:779.0px;top:-5px;letter-spacing:-0.737px;color:#bbbbbb;">OK</div>
<div class="t" style="left:872.0px;top:-5px;letter-spacing:0.968px;color:#bbbbbb;">97...</div>
<div class="t" style="left:914.0px;top:-5px;letter-spacing:0.892px;color:#bbbbbb;">3,327 bytes</div>
<svg style="position:absolute;left:1046px;top:-3px;" width="11" height="11" viewBox="0 0 11 11"><rect x="0" y="6" width="2" height="5" fill="#b8743a"/><path d="M0 1 Q0 0 1 0 H5 L6 1 H10.5 V8 H6 L5 7 H0Z" fill="#f39a0a"/><rect x="1.5" y="1" width="2" height="5" fill="#ffc850" opacity="0.85"/><rect x="7" y="2" width="2" height="5" fill="#ffc850" opacity="0.7"/></svg>
<div class="t" style="left:1060.0px;top:-5px;letter-spacing:0.475px;color:#bbbbbb;">Medium</div>
<div class="t" style="left:1207.0px;top:-5px;letter-spacing:0.553px;color:#bbbbbb;">Form, Password,...</div>
<div class="t" style="left:28.4px;top:15px;letter-spacing:1.380px;color:#bbbbbb;">223</div>
<svg style="position:absolute;left:63px;top:18px;" width="16" height="8" viewBox="0 0 16 8"><path d="M0.3 4 L4.5 0.3 V2.8 H11.5 V0.3 L15.7 4 L11.5 7.7 V5.2 H4.5 V7.7Z" fill="#2a88dc"/><path d="M2 4 H14" stroke="#8ad8ff" stroke-width="1.2"/></svg>
<div class="t" style="left:83.0px;top:15px;letter-spacing:0.256px;color:#bbbbbb;">Pro...</div>
<div class="t" style="left:130.0px;top:15px;letter-spacing:1.048px;color:#bbbbbb;">2/4/24, 12:57:20 PM</div>
<div class="t" style="left:303.0px;top:15px;letter-spacing:-0.870px;color:#bbbbbb;">GET</div>
<div class="t" style="left:374.0px;top:15px;letter-spacing:1.110px;color:#bbbbbb;">https://0ad500c10410f19281987f0e005f0...</div>
<div class="t" style="left:743.4px;top:15px;letter-spacing:1.380px;color:#bbbbbb;">101</div>
<div class="t" style="left:779.0px;top:15px;letter-spacing:0.509px;color:#bbbbbb;">Switching...</div>
<div class="t" style="left:872.0px;top:15px;letter-spacing:0.831px;color:#bbbbbb;">1....</div>
<div class="t" style="left:914.0px;top:15px;letter-spacing:0.711px;color:#bbbbbb;">0 bytes</div>
<svg style="position:absolute;left:1046px;top:17px;" width="11" height="11" viewBox="0 0 11 11"><rect x="0" y="6" width="2" height="5" fill="#b8743a"/><path d="M0 1 Q0 0 1 0 H5 L6 1 H10.5 V8 H6 L5 7 H0Z" fill="#e8c400"/><rect x="1.5" y="1" width="2" height="5" fill="#fff27a" opacity="0.85"/><rect x="7" y="2" width="2" height="5" fill="#fff27a" opacity="0.7"/></svg>
<div class="t" style="left:1060.0px;top:15px;letter-spacing:0.125px;color:#bbbbbb;">Low</div>
<div class="t" style="left:28.4px;top:35px;letter-spacing:1.380px;color:#bbbbbb;">224</div>
<svg style="position:absolute;left:63px;top:38px;" width="16" height="8" viewBox="0 0 16 8"><path d="M0.3 4 L4.5 0.3 V2.8 H11.5 V0.3 L15.7 4 L11.5 7.7 V5.2 H4.5 V7.7Z" fill="#2a88dc"/><path d="M2 4 H14" stroke="#8ad8ff" stroke-width="1.2"/></svg>
<div class="t" style="left:83.0px;top:35px;letter-spacing:0.256px;color:#bbbbbb;">Pro...</div>
<div class="t" style="left:130.0px;top:35px;letter-spacing:1.048px;color:#bbbbbb;">2/4/24, 12:57:22 PM</div>
<div class="t" style="left:303.0px;top:35px;letter-spacing:-0.996px;color:#bbbbbb;">POST</div>
<div class="t" style="left:374.0px;top:35px;letter-spacing:1.110px;color:#bbbbbb;">https://0ad500c10410f19281987f0e005f0...</div>
<div class="t" style="left:743.4px;top:35px;letter-spacing:1.380px;color:#bbbbbb;">400</div>
<div class="t" style="left:779.0px;top:35px;letter-spacing:0.325px;color:#bbbbbb;">Bad Requ...</div>
<div class="t" style="left:872.0px;top:35px;letter-spacing:0.831px;color:#bbbbbb;">1....</div>
<div class="t" style="left:914.0px;top:35px;letter-spacing:0.794px;color:#bbbbbb;">19 bytes</div>
<svg style="position:absolute;left:1046px;top:37px;" width="11" height="11" viewBox="0 0 11 11"><rect x="0" y="6" width="2" height="5" fill="#b8743a"/><path d="M0 1 Q0 0 1 0 H5 L6 1 H10.5 V8 H6 L5 7 H0Z" fill="#e8c400"/><rect x="1.5" y="1" width="2" height="5" fill="#fff27a" opacity="0.85"/><rect x="7" y="2" width="2" height="5" fill="#fff27a" opacity="0.7"/></svg>
<div class="t" style="left:1060.0px;top:35px;letter-spacing:0.125px;color:#bbbbbb;">Low</div>
<div class="t" style="left:1207.0px;top:35px;letter-spacing:-1.400px;color:#bbbbbb;">JSON</div>
<div class="t" style="left:28.4px;top:55px;letter-spacing:1.380px;color:#bbbbbb;">225</div>
<svg style="position:absolute;left:63px;top:58px;" width="16" height="8" viewBox="0 0 16 8"><path d="M0.3 4 L4.5 0.3 V2.8 H11.5 V0.3 L15.7 4 L11.5 7.7 V5.2 H4.5 V7.7Z" fill="#2a88dc"/><path d="M2 4 H14" stroke="#8ad8ff" stroke-width="1.2"/></svg>
<div class="t" style="left:83.0px;top:55px;letter-spacing:0.256px;color:#bbbbbb;">Pro...</div>
<div class="t" style="left:130.0px;top:55px;letter-spacing:1.048px;color:#bbbbbb;">2/4/24, 12:57:25 PM</div>
<div class="t" style="left:303.0px;top:55px;letter-spacing:-0.870px;color:#bbbbbb;">GET</div>
<div class="t" style="left:374.0px;top:55px;letter-spacing:1.110px;color:#bbbbbb;">https://0ad500c10410f19281987f0e005f0...</div>
<div class="t" style="left:743.4px;top:55px;letter-spacing:1.380px;color:#bbbbbb;">200</div>
<div class="t" style="left:779.0px;top:55px;letter-spacing:-0.737px;color:#bbbbbb;">OK</div>
<div class="t" style="left:872.0px;top:55px;letter-spacing:0.831px;color:#bbbbbb;">1....</div>
<div class="t" style="left:914.0px;top:55px;letter-spacing:0.892px;color:#bbbbbb;">8,334 bytes</div>
<svg style="position:absolute;left:1046px;top:57px;" width="11" height="11" viewBox="0 0 11 11"><rect x="0" y="6" width="2" height="5" fill="#b8743a"/><path d="M0 1 Q0 0 1 0 H5 L6 1 H10.5 V8 H6 L5 7 H0Z" fill="#f39a0a"/><rect x="1.5" y="1" width="2" height="5" fill="#ffc850" opacity="0.85"/><rect x="7" y="2" width="2" height="5" fill="#ffc850" opacity="0.7"/></svg>
<div class="t" style="left:1060.0px;top:55px;letter-spacing:0.475px;color:#bbbbbb;">Medium</div>
<div class="t" style="left:1207.0px;top:55px;letter-spacing:0.406px;color:#bbbbbb;">Script</div>
<div class="t" style="left:28.4px;top:75px;letter-spacing:1.380px;color:#bbbbbb;">226</div>
<svg style="position:absolute;left:63px;top:78px;" width="16" height="8" viewBox="0 0 16 8"><path d="M0.3 4 L4.5 0.3 V2.8 H11.5 V0.3 L15.7 4 L11.5 7.7 V5.2 H4.5 V7.7Z" fill="#2a88dc"/><path d="M2 4 H14" stroke="#8ad8ff" stroke-width="1.2"/></svg>
<div class="t" style="left:83.0px;top:75px;letter-spacing:0.256px;color:#bbbbbb;">Pro...</div>
<div class="t" style="left:130.0px;top:75px;letter-spacing:1.048px;color:#bbbbbb;">2/4/24, 12:57:26 PM</div>
<div class="t" style="left:303.0px;top:75px;letter-spacing:-0.870px;color:#bbbbbb;">GET</div>
<div class="t" style="left:374.0px;top:75px;letter-spacing:1.110px;color:#bbbbbb;">https://0ad500c10410f19281987f0e005f0...</div>
<div class="t" style="left:743.4px;top:75px;letter-spacing:1.380px;color:#bbbbbb;">101</div>
<div class="t" style="left:779.0px;top:75px;letter-spacing:0.509px;color:#bbbbbb;">Switching...</div>
<div class="t" style="left:872.0px;top:75px;letter-spacing:0.831px;color:#bbbbbb;">1....</div>
<div class="t" style="left:914.0px;top:75px;letter-spacing:0.711px;color:#bbbbbb;">0 bytes</div>
<svg style="position:absolute;left:1046px;top:77px;" width="11" height="11" viewBox="0 0 11 11"><rect x="0" y="6" width="2" height="5" fill="#b8743a"/><path d="M0 1 Q0 0 1 0 H5 L6 1 H10.5 V8 H6 L5 7 H0Z" fill="#e8c400"/><rect x="1.5" y="1" width="2" height="5" fill="#fff27a" opacity="0.85"/><rect x="7" y="2" width="2" height="5" fill="#fff27a" opacity="0.7"/></svg>
<div class="t" style="left:1060.0px;top:75px;letter-spacing:0.125px;color:#bbbbbb;">Low</div>
<div class="t" style="left:28.4px;top:95px;letter-spacing:1.380px;color:#bbbbbb;">227</div>
<svg style="position:absolute;left:63px;top:98px;" width="16" height="8" viewBox="0 0 16 8"><path d="M0.3 4 L4.5 0.3 V2.8 H11.5 V0.3 L15.7 4 L11.5 7.7 V5.2 H4.5 V7.7Z" fill="#2a88dc"/><path d="M2 4 H14" stroke="#8ad8ff" stroke-width="1.2"/></svg>
<div class="t" style="left:83.0px;top:95px;letter-spacing:0.256px;color:#bbbbbb;">Pro...</div>
<div class="t" style="left:130.0px;top:95px;letter-spacing:1.048px;color:#bbbbbb;">2/4/24, 12:57:28 PM</div>
<div class="t" style="left:303.0px;top:95px;letter-spacing:-0.870px;color:#bbbbbb;">GET</div>
<div class="t" style="left:374.0px;top:95px;letter-spacing:1.110px;color:#bbbbbb;">https://0ad500c10410f19281987f0e005f0...</div>
<div class="t" style="left:743.4px;top:95px;letter-spacing:1.380px;color:#bbbbbb;">302</div>
<div class="t" style="left:779.0px;top:95px;letter-spacing:0.170px;color:#bbbbbb;">Found</div>
<div class="t" style="left:872.0px;top:95px;letter-spacing:0.831px;color:#bbbbbb;">1....</div>
<div class="t" style="left:914.0px;top:95px;letter-spacing:0.711px;color:#bbbbbb;">0 bytes</div>
<div class="t" style="left:28.4px;top:115px;letter-spacing:1.380px;color:#bbbbbb;">228</div>
<svg style="position:absolute;left:63px;top:118px;" width="16" height="8" viewBox="0 0 16 8"><path d="M0.3 4 L4.5 0.3 V2.8 H11.5 V0.3 L15.7 4 L11.5 7.7 V5.2 H4.5 V7.7Z" fill="#2a88dc"/><path d="M2 4 H14" stroke="#8ad8ff" stroke-width="1.2"/></svg>
<div class="t" style="left:83.0px;top:115px;letter-spacing:0.256px;color:#bbbbbb;">Pro...</div>
<div class="t" style="left:130.0px;top:115px;letter-spacing:1.048px;color:#bbbbbb;">2/4/24, 12:57:29 PM</div>
<div class="t" style="left:303.0px;top:115px;letter-spacing:-0.870px;color:#bbbbbb;">GET</div>
<div class="t" style="left:374.0px;top:115px;letter-spacing:1.110px;color:#bbbbbb;">https://0ad500c10410f19281987f0e005f0...</div>
<div class="t" style="left:743.4px;top:115px;letter-spacing:1.380px;color:#bbbbbb;">200</div>
<div class="t" style="left:779.0px;top:115px;letter-spacing:-0.737px;color:#bbbbbb;">OK</div>
<div class="t" style="left:872.0px;top:115px;letter-spacing:0.831px;color:#bbbbbb;">1....</div>
<div class="t" style="left:914.0px;top:115px;letter-spacing:0.892px;color:#bbbbbb;">3,249 bytes</div>
<svg style="position:absolute;left:1046px;top:117px;" width="11" height="11" viewBox="0 0 11 11"><rect x="0" y="6" width="2" height="5" fill="#b8743a"/><path d="M0 1 Q0 0 1 0 H5 L6 1 H10.5 V8 H6 L5 7 H0Z" fill="#f39a0a"/><rect x="1.5" y="1" width="2" height="5" fill="#ffc850" opacity="0.85"/><rect x="7" y="2" width="2" height="5" fill="#ffc850" opacity="0.7"/></svg>
<div class="t" style="left:1060.0px;top:115px;letter-spacing:0.475px;color:#bbbbbb;">Medium</div>
<div class="t" style="left:1207.0px;top:115px;letter-spacing:0.553px;color:#bbbbbb;">Form, Password,...</div>
<div class="t" style="left:28.4px;top:135px;letter-spacing:1.380px;color:#bbbbbb;">229</div>
<svg style="position:absolute;left:63px;top:138px;" width="16" height="8" viewBox="0 0 16 8"><path d="M0.3 4 L4.5 0.3 V2.8 H11.5 V0.3 L15.7 4 L11.5 7.7 V5.2 H4.5 V7.7Z" fill="#2a88dc"/><path d="M2 4 H14" stroke="#8ad8ff" stroke-width="1.2"/></svg>
<div class="t" style="left:83.0px;top:135px;letter-spacing:0.256px;color:#bbbbbb;">Pro...</div>
<div class="t" style="left:130.0px;top:135px;letter-spacing:1.048px;color:#bbbbbb;">2/4/24, 12:57:30 PM</div>
<div class="t" style="left:303.0px;top:135px;letter-spacing:-0.870px;color:#bbbbbb;">GET</div>
<div class="t" style="left:374.0px;top:135px;letter-spacing:1.110px;color:#bbbbbb;">https://0ad500c10410f19281987f0e005f0...</div>
<div class="t" style="left:743.4px;top:135px;letter-spacing:1.380px;color:#bbbbbb;">101</div>
<div class="t" style="left:779.0px;top:135px;letter-spacing:0.509px;color:#bbbbbb;">Switching...</div>
<div class="t" style="left:872.0px;top:135px;letter-spacing:0.831px;color:#bbbbbb;">1....</div>
<div class="t" style="left:914.0px;top:135px;letter-spacing:0.711px;color:#bbbbbb;">0 bytes</div>
<svg style="position:absolute;left:1046px;top:137px;" width="11" height="11" viewBox="0 0 11 11"><rect x="0" y="6" width="2" height="5" fill="#b8743a"/><path d="M0 1 Q0 0 1 0 H5 L6 1 H10.5 V8 H6 L5 7 H0Z" fill="#e8c400"/><rect x="1.5" y="1" width="2" height="5" fill="#fff27a" opacity="0.85"/><rect x="7" y="2" width="2" height="5" fill="#fff27a" opacity="0.7"/></svg>
<div class="t" style="left:1060.0px;top:135px;letter-spacing:0.125px;color:#bbbbbb;">Low</div>
<div style="left:0px;top:153px;width:1350px;height:20px;background:#0f2a3f;"></div>
<div class="t" style="left:28.4px;top:155px;letter-spacing:1.380px;color:#bbbbbb;">230</div>
<svg style="position:absolute;left:63px;top:158px;" width="16" height="8" viewBox="0 0 16 8"><path d="M0.3 4 L4.5 0.3 V2.8 H11.5 V0.3 L15.7 4 L11.5 7.7 V5.2 H4.5 V7.7Z" fill="#2a88dc"/><path d="M2 4 H14" stroke="#8ad8ff" stroke-width="1.2"/></svg>
<div class="t" style="left:83.0px;top:155px;letter-spacing:0.256px;color:#bbbbbb;">Pro...</div>
<div class="t" style="left:130.0px;top:155px;letter-spacing:1.048px;color:#bbbbbb;">2/4/24, 12:57:33 PM</div>
<div class="t" style="left:303.0px;top:155px;letter-spacing:-0.996px;color:#bbbbbb;">POST</div>
<div class="t" style="left:374.0px;top:155px;letter-spacing:1.110px;color:#bbbbbb;">https://0ad500c10410f19281987f0e005f0...</div>
<div class="t" style="left:743.4px;top:155px;letter-spacing:1.380px;color:#bbbbbb;">200</div>
<div class="t" style="left:779.0px;top:155px;letter-spacing:-0.737px;color:#bbbbbb;">OK</div>
<div class="t" style="left:872.0px;top:155px;letter-spacing:0.831px;color:#bbbbbb;">1....</div>
<div class="t" style="left:914.0px;top:155px;letter-spacing:0.892px;color:#bbbbbb;">3,379 bytes</div>
<svg style="position:absolute;left:1046px;top:157px;" width="11" height="11" viewBox="0 0 11 11"><rect x="0" y="6" width="2" height="5" fill="#b8743a"/><path d="M0 1 Q0 0 1 0 H5 L6 1 H10.5 V8 H6 L5 7 H0Z" fill="#f39a0a"/><rect x="1.5" y="1" width="2" height="5" fill="#ffc850" opacity="0.85"/><rect x="7" y="2" width="2" height="5" fill="#ffc850" opacity="0.7"/></svg>
<div class="t" style="left:1060.0px;top:155px;letter-spacing:0.475px;color:#bbbbbb;">Medium</div>
<div class="t" style="left:1207.0px;top:155px;letter-spacing:0.553px;color:#bbbbbb;">Form, Password,...</div>
<div class="t" style="left:28.4px;top:175px;letter-spacing:1.380px;color:#bbbbbb;">231</div>
<svg style="position:absolute;left:63px;top:178px;" width="16" height="8" viewBox="0 0 16 8"><path d="M0.3 4 L4.5 0.3 V2.8 H11.5 V0.3 L15.7 4 L11.5 7.7 V5.2 H4.5 V7.7Z" fill="#2a88dc"/><path d="M2 4 H14" stroke="#8ad8ff" stroke-width="1.2"/></svg>
<div class="t" style="left:83.0px;top:175px;letter-spacing:0.256px;color:#bbbbbb;">Pro...</div>
<div class="t" style="left:130.0px;top:175px;letter-spacing:1.048px;color:#bbbbbb;">2/4/24, 12:57:35 PM</div>
<div class="t" style="left:303.0px;top:175px;letter-spacing:-0.870px;color:#bbbbbb;">GET</div>
<div class="t" style="left:374.0px;top:175px;letter-spacing:1.110px;color:#bbbbbb;">https://0ad500c10410f19281987f0e005f0...</div>
<div class="t" style="left:743.4px;top:175px;letter-spacing:1.380px;color:#bbbbbb;">101</div>
<div class="t" style="left:779.0px;top:175px;letter-spacing:0.509px;color:#bbbbbb;">Switching...</div>
<div class="t" style="left:872.0px;top:175px;letter-spacing:0.831px;color:#bbbbbb;">1....</div>
<div class="t" style="left:914.0px;top:175px;letter-spacing:0.711px;color:#bbbbbb;">0 bytes</div>
<svg style="position:absolute;left:1046px;top:177px;" width="11" height="11" viewBox="0 0 11 11"><rect x="0" y="6" width="2" height="5" fill="#b8743a"/><path d="M0 1 Q0 0 1 0 H5 L6 1 H10.5 V8 H6 L5 7 H0Z" fill="#e8c400"/><rect x="1.5" y="1" width="2" height="5" fill="#fff27a" opacity="0.85"/><rect x="7" y="2" width="2" height="5" fill="#fff27a" opacity="0.7"/></svg>
<div class="t" style="left:1060.0px;top:175px;letter-spacing:0.125px;color:#bbbbbb;">Low</div>
</div>
<div style="left:1353px;top:466px;width:10px;height:193px;background:#404345;"></div>
<div style="left:1355px;top:590px;width:6px;height:66px;background:#5a5e60;border-radius:3px"></div>
<div style="left:0px;top:661px;width:1364px;height:2px;background:#323436;"></div>
<div style="left:1px;top:663px;width:1361px;height:18px;border:1px solid #5e6060;background:#3c3f41;"></div>
<div class="t" style="left:12.0px;top:664px;letter-spacing:0.408px;color:#bbbbbb;">Alerts</div>
<svg style="position:absolute;left:64px;top:664px;" width="16" height="16" viewBox="0 0 16 16"><path d="M0 9 H2.6 V16 H0Z" fill="#c08040"/><path d="M0 13 H2.6 V16 H0Z" fill="#8a5a30" opacity="0.7"/><path d="M0 1.5 Q0 0 1.5 0 H7.5 Q8.5 0.3 9 1.3 H16 V11.5 H9.2 Q8.5 10.2 7.5 10 H0Z" fill="#e8402a"/><path d="M2.2 1 H5.4 V9 H2.2Z" fill="#ff9a80" opacity="0.8"/><path d="M10.5 2.3 H13 V10.5 H10.5Z" fill="#ff9a80" opacity="0.65"/><path d="M7.5 0.5 Q8.3 1 8.8 1.8 V10.5 Q8.2 10 7.5 10Z" fill="#b82a18" opacity="0.6"/><path d="M14.6 1.3 H16 V11.5 H14.6Z" fill="#b82a18" opacity="0.55"/></svg>
<div class="t" style="left:85.0px;top:664px;letter-spacing:1.380px;color:#bbbbbb;">0</div>
<svg style="position:absolute;left:104px;top:664px;" width="16" height="16" viewBox="0 0 16 16"><path d="M0 9 H2.6 V16 H0Z" fill="#c08040"/><path d="M0 13 H2.6 V16 H0Z" fill="#8a5a30" opacity="0.7"/><path d="M0 1.5 Q0 0 1.5 0 H7.5 Q8.5 0.3 9 1.3 H16 V11.5 H9.2 Q8.5 10.2 7.5 10 H0Z" fill="#f39a0a"/><path d="M2.2 1 H5.4 V9 H2.2Z" fill="#ffc850" opacity="0.8"/><path d="M10.5 2.3 H13 V10.5 H10.5Z" fill="#ffc850" opacity="0.65"/><path d="M7.5 0.5 Q8.3 1 8.8 1.8 V10.5 Q8.2 10 7.5 10Z" fill="#d87400" opacity="0.6"/><path d="M14.6 1.3 H16 V11.5 H14.6Z" fill="#d87400" opacity="0.55"/></svg>
<div class="t" style="left:125.0px;top:664px;letter-spacing:1.380px;color:#bbbbbb;">2</div>
<svg style="position:absolute;left:144px;top:664px;" width="16" height="16" viewBox="0 0 16 16"><path d="M0 9 H2.6 V16 H0Z" fill="#c08040"/><path d="M0 13 H2.6 V16 H0Z" fill="#8a5a30" opacity="0.7"/><path d="M0 1.5 Q0 0 1.5 0 H7.5 Q8.5 0.3 9 1.3 H16 V11.5 H9.2 Q8.5 10.2 7.5 10 H0Z" fill="#e8c400"/><path d="M2.2 1 H5.4 V9 H2.2Z" fill="#fff27a" opacity="0.8"/><path d="M10.5 2.3 H13 V10.5 H10.5Z" fill="#fff27a" opacity="0.65"/><path d="M7.5 0.5 Q8.3 1 8.8 1.8 V10.5 Q8.2 10 7.5 10Z" fill="#b89000" opacity="0.6"/><path d="M14.6 1.3 H16 V11.5 H14.6Z" fill="#b89000" opacity="0.55"/></svg>
<div class="t" style="left:165.0px;top:664px;letter-spacing:1.380px;color:#bbbbbb;">3</div>
<svg style="position:absolute;left:184px;top:664px;" width="16" height="16" viewBox="0 0 16 16"><path d="M0 9 H2.6 V16 H0Z" fill="#c08040"/><path d="M0 13 H2.6 V16 H0Z" fill="#8a5a30" opacity="0.7"/><path d="M0 1.5 Q0 0 1.5 0 H7.5 Q8.5 0.3 9 1.3 H16 V11.5 H9.2 Q8.5 10.2 7.5 10 H0Z" fill="#6aa4e0"/><path d="M2.2 1 H5.4 V9 H2.2Z" fill="#c0dcff" opacity="0.8"/><path d="M10.5 2.3 H13 V10.5 H10.5Z" fill="#c0dcff" opacity="0.65"/><path d="M7.5 0.5 Q8.3 1 8.8 1.8 V10.5 Q8.2 10 7.5 10Z" fill="#3a78c0" opacity="0.6"/><path d="M14.6 1.3 H16 V11.5 H14.6Z" fill="#3a78c0" opacity="0.55"/></svg>
<div class="t" style="left:205.0px;top:664px;letter-spacing:1.380px;color:#bbbbbb;">5</div>
<div style="left:219px;top:665px;width:1px;height:14px;background:#6a6a6a;"></div>
<div class="t" style="left:221.0px;top:664px;letter-spacing:0.552px;color:#bbbbbb;">Main Proxy: localhost:8080</div>
<div class="t" style="left:861.0px;top:664px;letter-spacing:0.290px;color:#bbbbbb;">Current Scans</div>
<div class="t" style="left:990.0px;top:664px;letter-spacing:1.380px;color:#bbbbbb;">0</div>
<div class="t" style="left:1030.0px;top:664px;letter-spacing:1.380px;color:#bbbbbb;">0</div>
<div class="t" style="left:1070.0px;top:664px;letter-spacing:1.380px;color:#bbbbbb;">0</div>
<div class="t" style="left:1110.0px;top:664px;letter-spacing:1.380px;color:#bbbbbb;">0</div>
<div class="t" style="left:1150.0px;top:664px;letter-spacing:1.380px;color:#bbbbbb;">0</div>
<div class="t" style="left:1190.0px;top:664px;letter-spacing:1.380px;color:#bbbbbb;">0</div>
<div class="t" style="left:1230.0px;top:664px;letter-spacing:1.380px;color:#bbbbbb;">0</div>
<div class="t" style="left:1270.0px;top:664px;letter-spacing:1.380px;color:#bbbbbb;">0</div>
<div class="t" style="left:1310.0px;top:664px;letter-spacing:1.380px;color:#bbbbbb;">0</div>
<div class="t" style="left:1350.0px;top:664px;letter-spacing:1.380px;color:#bbbbbb;">0</div>
<svg style="position:absolute;left:969px;top:664px;" width="16" height="16" viewBox="0 0 16 16"><defs><radialGradient id="bu" cx="0.5" cy="0.35" r="0.65"><stop offset="0" stop-color="#ffa080"/><stop offset="1" stop-color="#f02a10"/></radialGradient></defs><path d="M8.00 0.00 L9.22 1.88 L11.06 0.61 L11.47 2.81 L13.66 2.34 L13.19 4.53 L15.39 4.94 L14.12 6.78 L16.00 8.00 L14.12 9.22 L15.39 11.06 L13.19 11.47 L13.66 13.66 L11.47 13.19 L11.06 15.39 L9.22 14.12 L8.00 16.00 L6.78 14.12 L4.94 15.39 L4.53 13.19 L2.34 13.66 L2.81 11.47 L0.61 11.06 L1.88 9.22 L0.00 8.00 L1.88 6.78 L0.61 4.94 L2.81 4.53 L2.34 2.34 L4.53 2.81 L4.94 0.61 L6.78 1.88Z" fill="url(#bu)"/></svg>
<svg style="position:absolute;left:1009px;top:664px;" width="16" height="16" viewBox="0 0 16 16"><path d="M4 1 H12 V8 H15 L8 15.5 L1 8 H4Z" fill="#f4f4f4" stroke="#111" stroke-width="1.2" stroke-linejoin="round"/><rect x="7" y="1.5" width="5" height="4" fill="#2a9ae8"/><rect x="4.5" y="5" width="4" height="4" fill="#e82a3a"/><rect x="8.5" y="6" width="4.5" height="4" fill="#40c040"/></svg>
<svg style="position:absolute;left:1049px;top:666px;" width="16" height="12" viewBox="0 0 16 12"><path d="M1 6 Q8 -1.5 15 6 Q8 13.5 1 6Z" fill="#f4f4f4" stroke="#111" stroke-width="1.4"/><circle cx="8" cy="6" r="2.8" fill="#6a6a8a"/><circle cx="8" cy="6" r="1.2" fill="#2a2a3a"/><circle cx="7" cy="5" r="0.7" fill="#fff"/></svg>
<svg style="position:absolute;left:1089px;top:664px;" width="16" height="16" viewBox="0 0 16 16"><path d="M6 0.5 Q13 4 12.5 10.5 Q12 15.5 8 15.5 Q4 15.5 4 11.5 Q4 8 7.5 6 Q8 3 6 0.5Z" fill="#f05a10"/><path d="M8 7.5 Q11 10 10.5 12.5 Q10 14.5 8 14.5 Q6 14.5 6 12.5 Q6 10 8 7.5Z" fill="#ffd030"/><ellipse cx="8" cy="13.5" rx="1.5" ry="1" fill="#fff8d0"/></svg>
<svg style="position:absolute;left:1129px;top:664px;" width="16" height="16" viewBox="0 0 16 16"><circle cx="8" cy="8" r="7" fill="#e84a4a"/><circle cx="8" cy="8" r="5" fill="#fff"/><circle cx="8" cy="8" r="3.5" fill="#e84a4a"/><circle cx="8" cy="8" r="1.8" fill="#fff"/></svg>
<svg style="position:absolute;left:1169px;top:664px;" width="16" height="16" viewBox="0 0 16 16"><path d="M1.5 15 L11 5" stroke="#222" stroke-width="2"/><path d="M7 3 L11 1 L15 6 L13 8 L11 5 Z" fill="#ddd" stroke="#333" stroke-width="0.6"/></svg>
<svg style="position:absolute;left:1209px;top:664px;" width="16" height="16" viewBox="0 0 16 16"><path d="M5.5 6 L3 4 L2 1 M5 8.5 L1.5 8 L0.5 6 M5 10.5 L2 12 L1 15 M10.5 6 L13 4 L14 1 M11 8.5 L14.5 8 L15.5 6 M11 10.5 L14 12 L15 15" stroke="#d02828" stroke-width="0.9" fill="none"/><ellipse cx="8" cy="10" rx="3" ry="4" fill="#d02828"/><circle cx="8" cy="4.5" r="2.2" fill="#d02828"/><circle cx="7.2" cy="9" r="0.8" fill="#ff9a9a"/></svg>
<svg style="position:absolute;left:1249px;top:664px;" width="16" height="16" viewBox="0 0 16 16"><path d="M5.5 6 L3 4 L2 1 M5 8.5 L1.5 8 L0.5 6 M5 10.5 L2 12 L1 15 M10.5 6 L13 4 L14 1 M11 8.5 L14.5 8 L15.5 6 M11 10.5 L14 12 L15 15" stroke="#c8c8c8" stroke-width="0.9" fill="none"/><ellipse cx="8" cy="10" rx="3" ry="4" fill="#d8d8d8" stroke="#777" stroke-width="0.5"/><circle cx="8" cy="4.5" r="2.2" fill="#d8d8d8" stroke="#777" stroke-width="0.5"/></svg>
<svg style="position:absolute;left:1289px;top:664px;" width="16" height="16" viewBox="0 0 16 16"><path d="M1 11 Q1 2 8 2 Q15 2 15 11Z" fill="#f3c41f" stroke="#a07a10" stroke-width="0.6"/><circle cx="8" cy="9" r="3.5" fill="#d8d8e8" stroke="#555" stroke-width="0.6"/><rect x="2" y="11" width="12" height="2" fill="#b08a20"/></svg>
<svg style="position:absolute;left:1329px;top:666px;" width="16" height="13" viewBox="0 0 16 13"><rect x="1" y="0" width="1" height="13" fill="#151515"/><rect x="3" y="0" width="1" height="13" fill="#151515"/><rect x="5" y="0" width="2" height="13" fill="#151515"/><rect x="8" y="0" width="1" height="13" fill="#151515"/><rect x="10" y="0" width="1" height="13" fill="#151515"/><rect x="12" y="0" width="2" height="13" fill="#151515"/><rect x="15" y="0" width="1" height="13" fill="#151515"/></svg>
</body></html>
